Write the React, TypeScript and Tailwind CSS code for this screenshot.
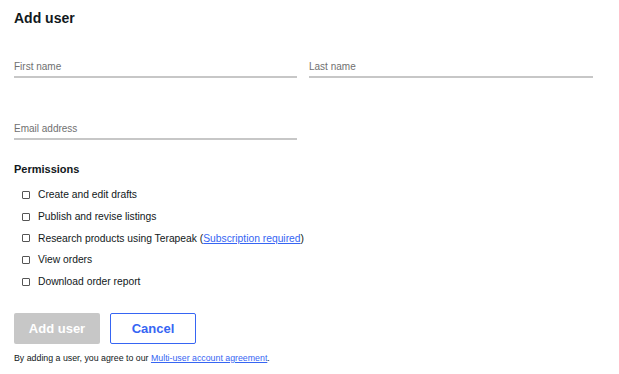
import React, { useState } from "react";

const permissions = [
  "Create and edit drafts",
  "Publish and revise listings",
  "Research products using Terapeak",
  "View orders",
  "Download order report",
] as const;

const Field: React.FC<{ label: string }> = ({ label }) => (
  <label className="flex flex-col pt-[2px]">
    <span className="text-[10px] leading-[14px] text-[#707070]">{label}</span>
    <input className="h-[2px] outline-none" />
    <span className="block h-[2px] bg-[#c7c7c7]" />
  </label>
);

const App: React.FC = () => {
  const [checked, setChecked] = useState<Record<string, boolean>>({});

  return (
    <div
      className="w-[619px] h-[374px] bg-white px-[14px] pt-[8px] text-[#111820]"
      style={{ fontFamily: '"Liberation Sans", Arial, sans-serif' }}
    >
      <h1 className="text-[14px] leading-[20px] font-bold">Add user</h1>

      <div className="mt-[30px] grid grid-cols-[283px_284px] gap-x-[12px]">
        <Field label="First name" />
        <Field label="Last name" />
      </div>

      <div className="mt-[42px] w-[283px]">
        <Field label="Email address" />
      </div>

      <h2 className="mt-[21px] text-[11px] leading-[16px] font-bold">Permissions</h2>

      <ul className="mt-[7px] flex flex-col">
        {permissions.map((p) => (
          <li key={p} className="flex h-[21.75px] items-center pl-[8px] text-[10.3px]">
            <input
              type="checkbox"
              checked={!!checked[p]}
              onChange={() => setChecked((prev) => ({ ...prev, [p]: !prev[p] }))}
              className="h-[8px] w-[8px] appearance-none rounded-[1px] border border-[#555] bg-white"
            />
            <span className="ml-[8px]">
              {p}
              {p.includes("Terapeak") && (
                <>
                  {" ("}
                  <a href="#" className="text-[#3665f3] underline">
                    Subscription required
                  </a>
                  )
                </>
              )}
            </span>
          </li>
        ))}
      </ul>

      <div className="mt-[20px] flex gap-[10px]">
        <button
          disabled
          className="h-[31px] w-[86px] rounded-[2px] bg-[#c7c7c7] text-[13px] font-bold text-white"
        >
          Add user
        </button>
        <button className="h-[31px] w-[86px] rounded-[2px] border border-[#3665f3] bg-white text-[13px] font-bold text-[#3665f3]">
          Cancel
        </button>
      </div>

      <p className="mt-[8px] text-[8.8px] leading-[12px]">
        By adding a user, you agree to our{" "}
        <a href="#" className="text-[#3665f3] underline">
          Multi-user account agreement
        </a>
        .
      </p>
    </div>
  );
};

export default App;
